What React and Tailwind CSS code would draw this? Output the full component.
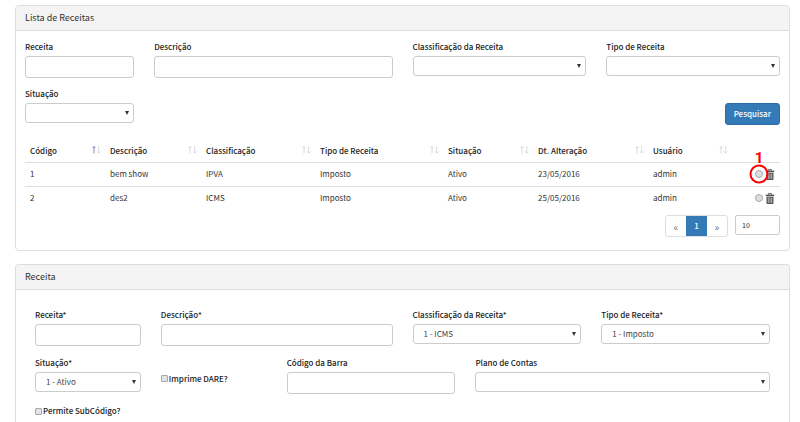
import { useId } from "react";
import clsx from "clsx";

const LABEL = "block text-[8px] leading-3 font-medium text-[#222] whitespace-nowrap";
const CONTROL =
  "block w-full appearance-none rounded-[3px] border border-[#ccc] bg-white px-2.5 text-[8px] leading-4 text-[#444] outline-none";

function Panel({ title, className, children }) {
  return (
    <section className={clsx("border border-[#ddd] bg-white", className)}>
      <h2 className="rounded-t-[3px] border-b border-[#ddd] bg-[#f4f4f4] px-[9px] py-1 text-[9px] leading-4 text-[#333]">
        {title}
      </h2>
      {children}
    </section>
  );
}

function TextField({ label, className }) {
  const id = useId();
  return (
    <div className={className}>
      <label htmlFor={id} className={LABEL}>{label}</label>
      <input id={id} type="text" className={clsx(CONTROL, "mt-[3px] h-[22px]")} />
    </div>
  );
}

function SelectField({ label, options = [""], className }) {
  const id = useId();
  return (
    <div className={className}>
      <label htmlFor={id} className={LABEL}>{label}</label>
      <div className="relative mt-[3px]">
        <select id={id} className={clsx(CONTROL, "h-5")}>
          {options.map((o) => (
            <option key={o}>{o}</option>
          ))}
        </select>
        <svg viewBox="0 0 4 4" className="pointer-events-none absolute top-2 right-[5px] size-1" fill="#333">
          <path d="M0 0h4L2 4z" />
        </svg>
      </div>
    </div>
  );
}

function CheckField({ label, className }) {
  return (
    <label className={clsx("flex items-center text-[8px] leading-3 font-medium text-[#222]", className)}>
      <input
        type="checkbox"
        className="mr-px size-[7px] appearance-none rounded-[1px] border border-[#aaa] bg-[#e4e4e4]"
      />
      {label}
    </label>
  );
}

function SortIcon({ active }) {
  return (
    <svg viewBox="0 0 9 9" className="h-[9px] w-[9px] shrink-0" fill="none" strokeWidth="0.8">
      <path d="M2 7.5V0.5M0.5 2.1L2 0.5l1.5 1.6" stroke={active ? "#6a6ab8" : "#cfcfdc"} />
      <path d="M6.7 0V7M5.2 5.4L6.7 7l1.5-1.6" stroke="#cfcfdc" />
    </svg>
  );
}

function TrashIcon() {
  return (
    <svg viewBox="0 0 10 11" className="h-[11px] w-[10px]" fill="none">
      <path d="M3.5 1.8V0.6h3v1.2" stroke="#555" strokeWidth="0.9" />
      <path d="M0.8 1.6h8.4v1.6H0.8z" fill="#555" />
      <path d="M1.5 3.8h7v6.4q0 .8-.8.8H2.3q-.8 0-.8-.8z" fill="#555" />
      <path d="M3.3 4.5v5.4M5 4.5v5.4M6.7 4.5v5.4" stroke="#ccc" strokeWidth="0.8" />
    </svg>
  );
}

const COLUMNS = [
  ["Código", "w-[80px]"],
  ["Descrição", "w-[96px]"],
  ["Classificação", "w-[114px]"],
  ["Tipo de Receita", "w-[128px]"],
  ["Situação", "w-[90px]"],
  ["Dt. Alteração", "w-[115px]"],
  ["Usuário", "w-[84px]"],
];

const ROWS = [
  ["1", "bem show", "IPVA", "Imposto", "Ativo", "23/05/2016", "admin"],
  ["2", "des2", "ICMS", "Imposto", "Ativo", "25/05/2016", "admin"],
];

function RevenueTable() {
  return (
    <table className="mt-[15px] w-full table-fixed border-collapse text-left text-[8px] leading-3 text-[#333]">
      <thead>
        <tr className="h-[22px]">
          {COLUMNS.map(([name, width], i) => (
            <th key={name} className={clsx("p-0 pr-1 pl-[5px] font-medium text-[#222]", width)}>
              <div className="flex items-center justify-between whitespace-nowrap">
                {name}
                <SortIcon active={i === 0} />
              </div>
            </th>
          ))}
          <th className="w-[48px] p-0" />
        </tr>
      </thead>
      <tbody>
        {ROWS.map((row, i) => (
          <tr key={row[0]} className="h-6 border-t border-[#ddd]">
            {row.map((cell, c) => (
              <td key={c} className="p-0 pl-[5px]">{cell}</td>
            ))}
            <td className="p-0 pr-[5px]">
              <div className="flex items-center justify-end gap-[2px]">
                <span className="relative flex">
                  <input
                    type="radio"
                    name="receita"
                    aria-label={row[1]}
                    className="size-2 appearance-none rounded-full border border-[#aaa] bg-[#dedede]"
                  />
                  {i === 0 && (
                    <span className="pointer-events-none absolute top-1/2 left-1/2 size-[19px] -translate-1/2 rounded-full border-2 border-[#f00]">
                      <span className="absolute bottom-4 left-1/2 -translate-x-1/2 font-[Roboto,sans-serif] text-[15px] leading-4 font-bold text-[#f00]">
                        1
                      </span>
                    </span>
                  )}
                </span>
                <button type="button" aria-label={"Excluir " + row[1]}>
                  <TrashIcon />
                </button>
              </div>
            </td>
          </tr>
        ))}
      </tbody>
    </table>
  );
}

export default function App() {
  return (
    <main className="flex min-h-screen flex-col bg-white pt-[5px] pr-[10px] pl-[15px] font-['Noto_Sans_CJK_SC',sans-serif]">
      <Panel title="Lista de Receitas" className="rounded-[4px]">
        <div className="px-[9px] pt-[10px] pb-[13px]">
          <form className="grid grid-cols-12 gap-x-5">
            <TextField label="Receita" className="col-span-2" />
            <TextField label="Descrição" className="col-span-4" />
            <SelectField label="Classificação da Receita" className="col-span-3" />
            <SelectField label="Tipo de Receita" className="col-span-3" />
            <SelectField label="Situação" className="col-span-2 mt-[10px]" />
            <div className="col-span-10 mt-[25px] flex items-start justify-end">
              <button
                type="button"
                className="h-[22px] rounded-[3px] border border-[#2e6da4] bg-[#337ab7] px-2 text-[8px] leading-4 font-medium text-white"
              >
                Pesquisar
              </button>
            </div>
          </form>
          <RevenueTable />
          <div className="mt-[5px] flex justify-end gap-[7px]">
            <nav className="flex h-[22px] overflow-hidden rounded-[3px] border border-[#ddd] text-[8px] text-[#777]">
              <button type="button" className="w-5 text-[10px]">«</button>
              <button type="button" className="w-[21px] bg-[#337ab7] font-medium text-white">1</button>
              <button type="button" className="w-5 text-[10px]">»</button>
            </nav>
            <input
              type="text"
              defaultValue="10"
              aria-label="Registros por página"
              className="h-5 w-[45px] rounded-[2px] border border-[#ccc] px-1.5 text-[7px] text-[#222] outline-none"
            />
          </div>
        </div>
      </Panel>

      <Panel title="Receita" className="mt-[13px] flex-1 rounded-t-[4px] border-b-0">
        <form className="grid grid-cols-12 gap-x-5 gap-y-[11px] px-[19px] pt-[19px]">
          <TextField label="Receita*" className="col-span-2" />
          <TextField label="Descrição*" className="col-span-4" />
          <SelectField label="Classificação da Receita*" options={["1 - ICMS"]} className="col-span-3" />
          <SelectField label="Tipo de Receita*" options={["1 - Imposto"]} className="col-span-3" />
          <SelectField label="Situação*" options={["1 - Ativo"]} className="col-span-2" />
          <CheckField label="Imprime DARE?" className="col-span-2 pt-1.5" />
          <TextField label="Código da Barra" className="col-span-3" />
          <SelectField label="Plano de Contas" className="col-span-5" />
          <CheckField label="Permite SubCódigo?" className="col-span-4" />
        </form>
      </Panel>
    </main>
  );
}
